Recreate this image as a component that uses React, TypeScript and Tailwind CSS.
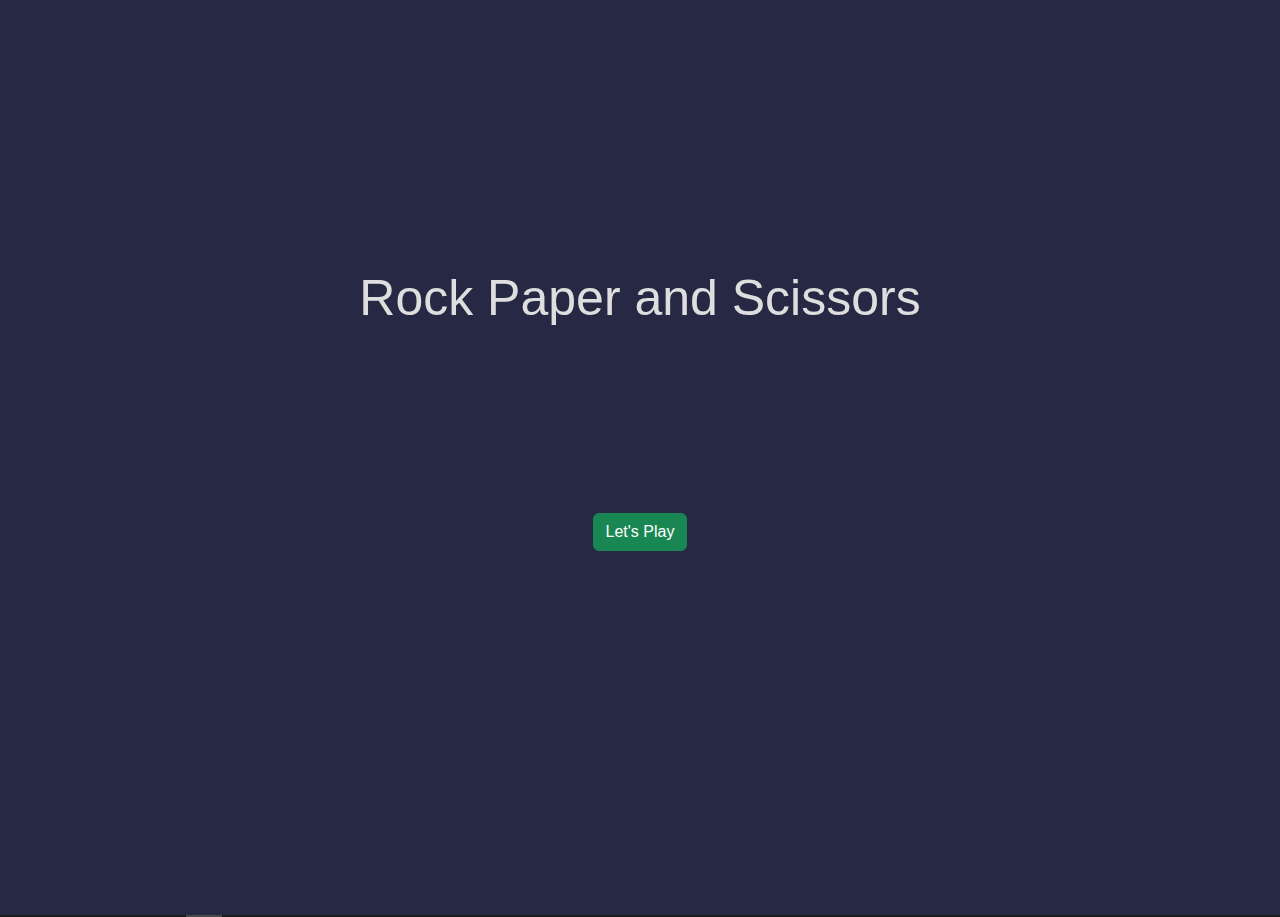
export default function App() {
  return (
    <div className="flex h-[917px] w-full flex-col bg-[#272944] font-['Liberation_Sans',Arial,sans-serif]">
      <div className="flex flex-1 flex-col items-center">
        <h1 className="mt-[270px] text-[50px] leading-[56px] font-normal text-[#dedede]">
          Rock Paper and Scissors
        </h1>
        <button className="mt-[187px] rounded-md border border-[#198754] bg-[#198754] px-3 py-1.5 text-base leading-6 text-white">
          Let's Play
        </button>
      </div>
      <div className="h-[2px] w-full bg-[#1c1c1c] pl-[186px]">
        <div className="h-full w-[36px] bg-[#4a4a4a]" />
      </div>
    </div>
  );
}
